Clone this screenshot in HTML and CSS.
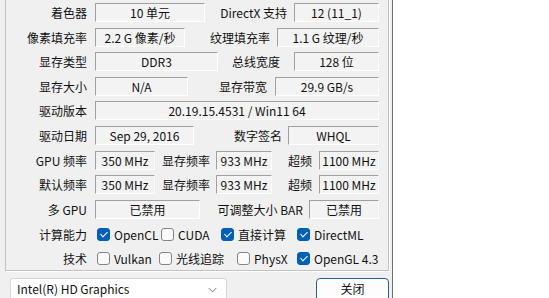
FILE: index.html
```html
<!DOCTYPE html>
<html lang="zh-CN">
	<head>
		<meta charset="UTF-8" />
		<meta name="viewport" content="width=device-width, initial-scale=1.0" />
		<title>显卡信息</title>
		<link rel="stylesheet" href="styles.css">
	</head>
	<body>
		<section class="window">
			<div class="group">
				<div class="row">
					<span class="label">着色器</span>
					<span class="field w110">10 单元</span>
					<span class="label2 g7">DirectX 支持</span>
					<span class="field w85">12 (11_1)</span>
				</div>
				<div class="row">
					<span class="label">像素填充率</span>
					<span class="field w90">2.2 G 像素/秒</span>
					<span class="label2 g7">纹理填充率</span>
					<span class="field w102">1.1 G 纹理/秒</span>
				</div>
				<div class="row">
					<span class="label">显存类型</span>
					<span class="field w123">DDR3</span>
					<span class="label2 g14">总线宽度</span>
					<span class="field w85">128 位</span>
				</div>
				<div class="row">
					<span class="label">显存大小</span>
					<span class="field w93">N/A</span>
					<span class="label2 g8">显存带宽</span>
					<span class="field w104">29.9 GB/s</span>
				</div>
				<div class="row">
					<span class="label">驱动版本</span>
					<span class="field grow">20.19.15.4531 / Win11 64</span>
				</div>
				<div class="row">
					<span class="label">驱动日期</span>
					<span class="field w99">Sep 29, 2016</span>
					<span class="label2 g6">数字签名</span>
					<span class="field w91">WHQL</span>
				</div>
				<div class="row">
					<span class="label">GPU 频率</span>
					<span class="field w60">350 MHz</span>
					<span class="label-mid">显存频率</span>
					<span class="field w56">933 MHz</span>
					<span class="label2 g7">超频</span>
					<span class="field w60">1100 MHz</span>
				</div>
				<div class="row">
					<span class="label">默认频率</span>
					<span class="field w60">350 MHz</span>
					<span class="label-mid">显存频率</span>
					<span class="field w56">933 MHz</span>
					<span class="label2 g7">超频</span>
					<span class="field w60">1100 MHz</span>
				</div>
				<div class="row">
					<span class="label">多 GPU</span>
					<span class="field w105">已禁用</span>
					<span class="label2 g6">可调整大小 BAR</span>
					<span class="field w70">已禁用</span>
				</div>
				<div class="row check-row first">
					<span class="label">计算能力</span>
					<label class="check w64"><span class="box on"></span>OpenCL</label>
					<label class="check w60"><span class="box"></span>CUDA</label>
					<label class="check w76"><span class="box on"></span>直接计算</label>
					<label class="check"><span class="box on"></span>DirectML</label>
				</div>
				<div class="row check-row second">
					<span class="label">技术</span>
					<label class="check w62"><span class="box"></span>Vulkan</label>
					<label class="check w78"><span class="box"></span>光线追踪</label>
					<label class="check w60"><span class="box"></span>PhysX</label>
					<label class="check"><span class="box on"></span>OpenGL 4.3</label>
				</div>
			</div>
			<div class="footer">
				<div class="select">
					Intel(R) HD Graphics
					<svg class="chevron" viewBox="0 0 10 6" fill="none" stroke="#606060" stroke-width="1">
						<path d="M1 1l4 4 4-4" />
					</svg>
				</div>
				<button class="close-btn">关闭</button>
			</div>
		</section>
	</body>
</html>
```
FILE: styles.css
```css
body {
	margin: 0;
	background-color: #ffffff;
	font-family: "Noto Sans CJK SC", "Noto Sans", sans-serif;
	font-size: 12px;
	color: #111111;
}

.window {
	box-sizing: border-box;
	width: 393px;
	height: 298px;
	background-color: #f0f0f0;
	border-right: 1px solid #6f6f6f;
	overflow: hidden;
}

/* group box, top edge is outside the picture */
.group {
	box-sizing: border-box;
	width: 384px;
	height: 271px;
	margin-left: 5px;
	padding-top: 3px;
	border: 1px solid #c2c2c2;
	border-top: none;
	box-shadow: 1px 1px 0 #ffffff;
	display: flex;
	flex-direction: column;
	gap: 5.6px;
}

.row {
	display: flex;
	align-items: center;
	height: 19px;
	padding-right: 9px;
	flex-shrink: 0;
}

.label {
	width: 81px;
	margin-right: 8px;
	text-align: right;
	white-space: nowrap;
	flex-shrink: 0;
}

.label2 {
	flex: 1;
	text-align: right;
	white-space: nowrap;
}

.label-mid {
	width: 55px;
	margin-right: 6px;
	text-align: right;
	white-space: nowrap;
	flex-shrink: 0;
}

.g6 { margin-right: 6px; }
.g7 { margin-right: 7px; }
.g8 { margin-right: 8px; }
.g14 { margin-right: 14px; }

.field {
	box-sizing: border-box;
	height: 19px;
	line-height: 17px;
	background-color: #f3f3f3;
	border-top: 1px solid #a0a0a0;
	border-left: 1px solid #a0a0a0;
	border-bottom: 1px solid #ffffff;
	border-right: 1px solid #ffffff;
	text-align: center;
	white-space: nowrap;
	overflow: hidden;
	flex-shrink: 0;
}

.grow { flex: 1; }
.w56 { width: 56px; }
.w60 { width: 60px; }
.w62 { width: 62px; }
.w64 { width: 64px; }
.w70 { width: 70px; }
.w76 { width: 76px; }
.w78 { width: 78px; }
.w85 { width: 85px; }
.w90 { width: 90px; }
.w91 { width: 91px; }
.w93 { width: 93px; }
.w99 { width: 99px; }
.w102 { width: 102px; }
.w104 { width: 104px; }
.w105 { width: 105px; }
.w110 { width: 110px; }
.w123 { width: 123px; }

.check-row.first {
	margin-top: 1px;
}

.check-row.second {
	margin-top: -1px;
}

.check-row .label {
	margin-right: 10px;
}

.check {
	display: flex;
	align-items: center;
	white-space: nowrap;
	flex-shrink: 0;
}

.box {
	box-sizing: border-box;
	width: 13px;
	height: 13px;
	margin-right: 4px;
	border: 1px solid #858585;
	border-radius: 3px;
	background-color: #fbfbfb;
	position: relative;
}

.box.on {
	background-color: #005fb8;
	border-color: #005fb8;
}

/* tick mark */
.box.on::after {
	content: "";
	position: absolute;
	left: 3.5px;
	top: 1px;
	width: 3px;
	height: 6px;
	border-right: 1.5px solid #ffffff;
	border-bottom: 1.5px solid #ffffff;
	transform: rotate(45deg);
}

.footer {
	display: flex;
	align-items: flex-start;
	margin-top: 7px;
	padding-left: 10px;
	padding-right: 3px;
}

.select {
	box-sizing: border-box;
	width: 217px;
	height: 24px;
	padding: 1px 9px 0 6px;
	line-height: 18px;
	background-color: #ffffff;
	border: 1px solid #d6d6d6;
	border-bottom-color: #8a8a8a;
	border-radius: 3px;
	display: flex;
	align-items: flex-start;
	justify-content: space-between;
}

.chevron {
	width: 9px;
	height: 6px;
	margin-top: 7px;
}

.close-btn {
	margin-left: auto;
	box-sizing: border-box;
	width: 73px;
	height: 24px;
	padding: 0 0 3px 0;
	font-family: "Noto Sans CJK SC", sans-serif;
	font-size: 12px;
	color: #111111;
	background-color: #fdfdfd;
	border: 1px solid #2f5f8f;
	border-radius: 4px;
	outline: none;
}
```
